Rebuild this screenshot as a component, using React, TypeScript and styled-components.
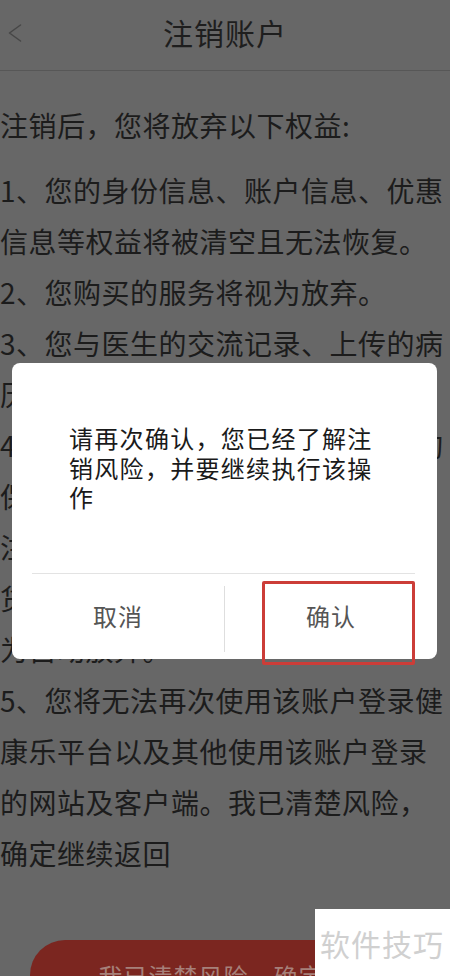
import React from "react";
import styled, { createGlobalStyle } from "styled-components";

const GlobalStyle = createGlobalStyle`
  html, body {
    margin: 0;
    padding: 0;
    background: #676767;
  }
  body {
    font-family: "Noto Sans CJK SC", "Noto Sans", sans-serif;
  }
  * { box-sizing: border-box; }
`;

const Page = styled.div`
  position: relative;
  width: 450px;
  height: 976px;
  overflow: hidden;
  background: #676767;
  color: #1c1c1c;
`;

const Header = styled.header`
  display: grid;
  grid-template-columns: 40px 1fr 40px;
  align-items: center;
  height: 71px;
  padding-bottom: 7px;
  border-bottom: 1px solid #575757;
`;

const BackButton = styled.span`
  display: flex;
  align-items: center;
  padding-left: 8px;
  padding-top: 3px;
`;

const Title = styled.h1`
  margin: 0;
  text-align: center;
  font-size: 30px;
  font-weight: 400;
  letter-spacing: 1px;
  line-height: 40px;
  color: #1e1e1e;
`;

const Content = styled.main`
  padding-top: 29px;
`;

const Line = styled.div<{ $intro?: boolean }>`
  font-size: 28px;
  line-height: 51px;
  letter-spacing: 0.5px;
  white-space: nowrap;
  margin-bottom: ${(p) => (p.$intro ? "14px" : "0")};
`;

const Cta = styled.div`
  display: flex;
  align-items: center;
  justify-content: center;
  margin: 61px 30px 0 30px;
  height: 70px;
  padding-left: 22px;
  border-radius: 35px;
  background: #7b2620;
  color: #a6807a;
  font-size: 24px;
  letter-spacing: 1px;
`;

const Modal = styled.div`
  position: absolute;
  top: 363px;
  left: 12px;
  width: 425px;
  height: 296px;
  background: #ffffff;
  border-radius: 8px;
  display: flex;
  flex-direction: column;
`;

const Message = styled.p`
  margin: 0;
  height: 210px;
  padding: 60px 0 0 57px;
  width: 370px;
  font-size: 24px;
  line-height: 29.5px;
  letter-spacing: 1.3px;
  color: #1a1a1a;
`;

const Divider = styled.div`
  height: 1px;
  margin: 0 22px 0 20px;
  background: #e3e3e3;
`;

const Actions = styled.div`
  display: flex;
  flex: 1;
`;

const ActionButton = styled.div`
  position: relative;
  flex: 1;
  display: flex;
  align-items: center;
  justify-content: center;
  padding-bottom: 2px;
  font-size: 24px;
  letter-spacing: 1px;
  color: #555555;
`;

const VSeparator = styled.div`
  width: 1px;
  margin: 12px 0 7px;
  background: #dedede;
`;

const Highlight = styled.div`
  position: absolute;
  left: 37px;
  top: 7px;
  width: 153px;
  height: 84px;
  border: 3px solid #cc3d38;
  border-radius: 2px;
`;

const Watermark = styled.div`
  position: absolute;
  right: 0;
  bottom: 0;
  width: 135px;
  height: 67px;
  background: #ffffff;
  display: flex;
  align-items: center;
  padding-left: 5px;
  font-size: 30px;
  letter-spacing: 1px;
  color: #d0d0d0;
`;

const lines = [
  "1、您的身份信息、账户信息、优惠",
  "信息等权益将被清空且无法恢复。",
  "2、您购买的服务将视为放弃。",
  "3、您与医生的交流记录、上传的病",
  "历资料等将被清空且无法恢复。",
  "4、您账户中的积分、优惠券、咨询",
  "保险等权益将被清空，未使用的",
  "注册礼包、服务包等未完成的订",
  "货款将按规则处理，其余部分视",
  "为自动放弃。",
  "5、您将无法再次使用该账户登录健",
  "康乐平台以及其他使用该账户登录",
  "的网站及客户端。我已清楚风险，",
  "确定继续返回",
];

export default function App() {
  return (
    <>
      <GlobalStyle />
      <Page>
        <Header>
          <BackButton>
            <svg width="14" height="18" viewBox="0 0 14 18" fill="none">
              <polyline
                points="12.5,1 1.5,9 12.5,17"
                stroke="#474747"
                strokeWidth="1.5"
                strokeLinecap="round"
                strokeLinejoin="round"
              />
            </svg>
          </BackButton>
          <Title>注销账户</Title>
          <span />
        </Header>
        <Content>
          <Line $intro>注销后，您将放弃以下权益:</Line>
          {lines.map((l, i) => (
            <Line key={i}>{l}</Line>
          ))}
        </Content>
        <Cta>我已清楚风险，确定继续</Cta>

        <Modal>
          <Message>请再次确认，您已经了解注销风险，并要继续执行该操作</Message>
          <Divider />
          <Actions>
            <ActionButton>取消</ActionButton>
            <VSeparator />
            <ActionButton>
              确认
              <Highlight />
            </ActionButton>
          </Actions>
        </Modal>

        <Watermark>软件技巧</Watermark>
      </Page>
    </>
  );
}
